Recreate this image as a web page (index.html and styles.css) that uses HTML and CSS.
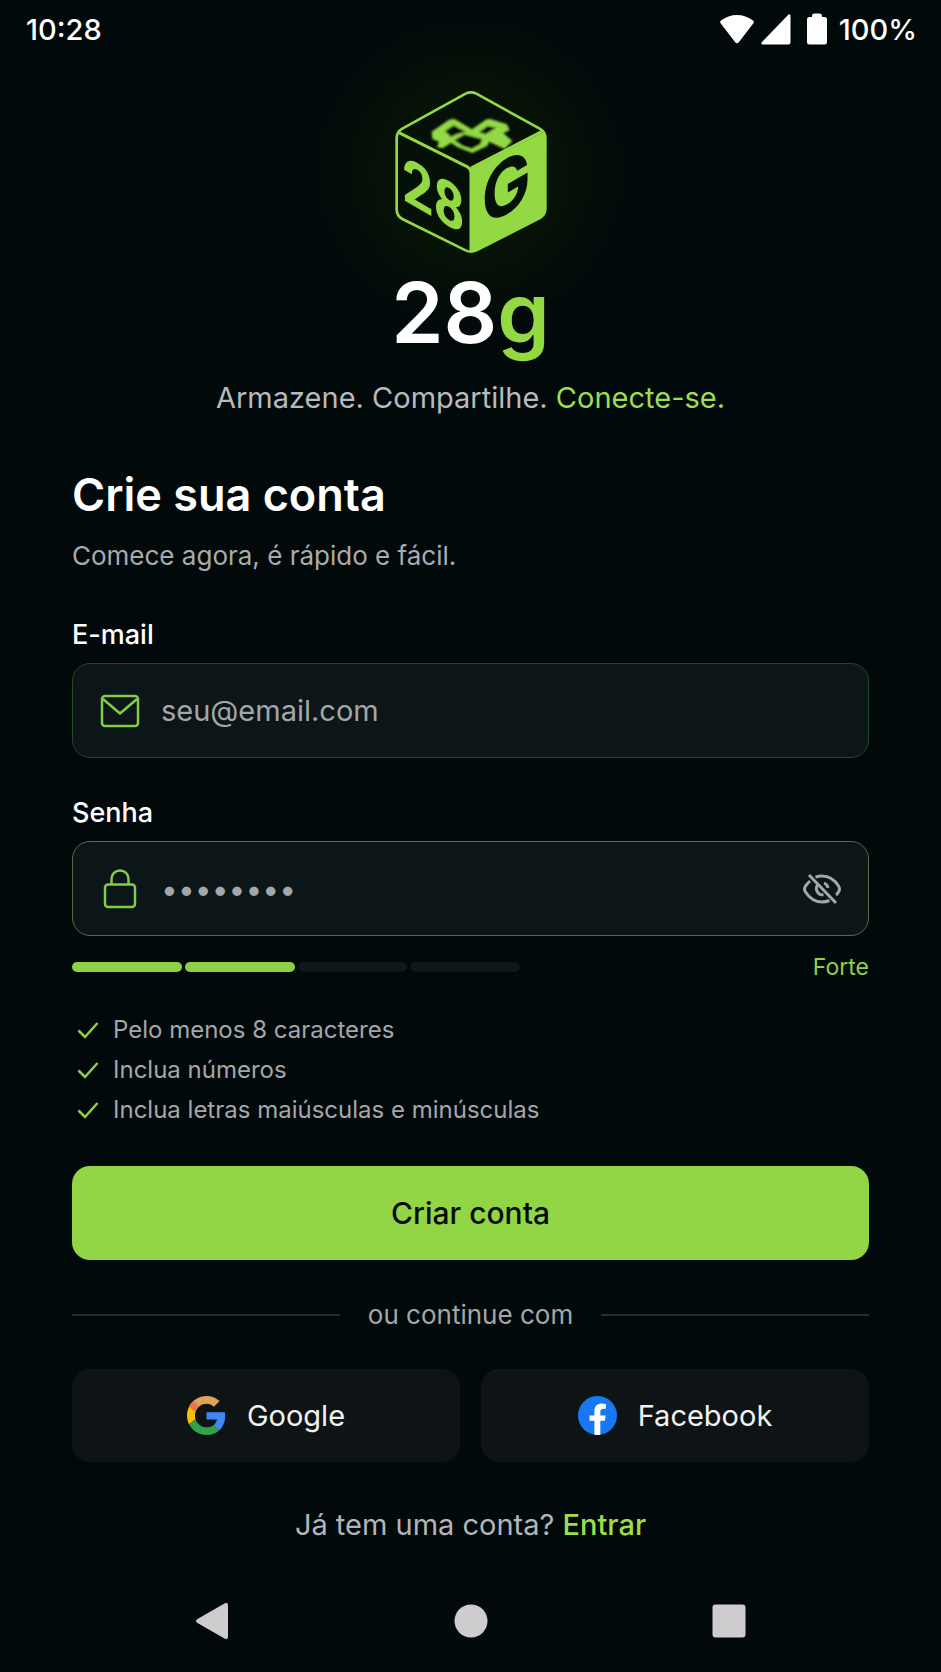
FILE: index.html
```html
<!doctype html>
<html lang="pt-BR">
<head>
  <meta charset="UTF-8" />
  <meta name="viewport" content="width=device-width, initial-scale=1.0" />
  <title>28g - Crie sua conta</title>
  <link rel="stylesheet" href="styles.css">
</head>
<body>
  <header class="status-bar">
    <span>10:28</span>
    <div class="status-icons">
      <svg class="wifi" width="36" height="30" viewBox="0 0 36 30"><path d="M2 6.500C11-1 25-1 34 6.500q1.500 1.300.4 2.700L19.800 28.200q-1.800 2.200-3.600 0L1.600 9.200Q.5 7.800 2 6.500z"/></svg>
      <svg class="signal" width="30" height="31" viewBox="0 0 30 31"><path d="M27 1Q29.500-1 29.500 2V28q0 2.500-2.500 2.500H2.500Q-1 30.500 1 28z"/></svg>
      <svg class="battery" width="20" height="32" viewBox="0 0 20 32"><path d="M5 4V3q0-2.500 2.500-2.500h5Q15 .500 15 3v1h2.500Q20 4 20 6.500v22.500q0 2.500-2.500 2.500h-15Q0 31.500 0 29V6.500Q0 4 2.500 4z"/></svg>
      <span>100%</span>
    </div>
  </header>

  <main class="signup">
    <section class="brand">
      <svg class="brand-logo" width="160" height="170" viewBox="60 50 480 510" role="img" aria-label="28G">
        <defs>
          <filter id="soft" x="-10%" y="-20%" width="120%" height="140%"><feGaussianBlur stdDeviation="2.500"/></filter>
        </defs>
        <!-- contorno do cubo -->
        <path class="cube-body" d="M284 70q16-8 32 0l190 105q17 10 17 28v212q0 18-17 28L316 540q-16 8-32 0L94 446q-17-10-17-28V203q0-18 17-28z"/>
        <!-- face direita -->
        <path class="cube-face" d="M300 296 518 186q5 8 5 17v212q0 18-17 28L316 540q-8 4-16 4z"/>
        <path class="cube-line" d="M82 186 288 289q12 6 12 20v232M300 293 512 184"/>
        <!-- face de cima -->
        <g class="cube-top" filter="url(#soft)">
          <path d="M182 184 232 150Q246 143 256 149L303 177 342 150Q350 144 360 147L408 162 416 180 397 188 424 212 401 236 354 214 350 226 304 248 260 231 240 218 215 234 198 231 204 214 184 206z"/>
          <path class="cube-hole" d="M222 182 248 165 284 184 258 192 240 200zM324 186 350 167 375 172 344 192zM250 210 280 192 334 206 328 222 302 236 274 227z"/>
        </g>
        <text class="cube-num" transform="matrix(.866 .5 0 1 94 387)">28</text>
        <text class="cube-letter" transform="matrix(.866 -.5 0 1 332 474)">G</text>
      </svg>
      <p class="brand-name">28<span>g</span></p>
      <p class="tagline">Armazene. Compartilhe. <span>Conecte-se.</span></p>
    </section>

    <h1>Crie sua conta</h1>
    <p class="subtitle">Comece agora, é rápido e fácil.</p>

    <form class="signup-form">
      <label for="email">E-mail</label>
      <div class="field">
        <svg class="field-icon" width="40" height="40" viewBox="0 0 40 40"><rect x="2" y="5" width="36" height="30" rx="3"/><path d="M3 8 20 22.500 37 8"/></svg>
        <input type="email" id="email" placeholder="seu@email.com" />
      </div>

      <label for="password">Senha</label>
      <div class="field field-active">
        <svg class="field-icon" width="40" height="40" viewBox="0 0 40 40"><rect x="5" y="15.500" width="30" height="22.500" rx="3"/><path d="M11.500 15V10a8.500 8.500 0 0 1 17 0v5"/></svg>
        <input type="password" id="password" value="abcdEF12" />
        <button type="button" class="toggle-password" aria-label="Mostrar senha">
          <svg width="40" height="32" viewBox="0 0 40 32"><path d="M13.500 4.200A20 20 0 0 1 20 3c7 0 13 4.500 16.500 10 1.300 2 1.300 4 0 6q-1 1.700-2.500 3M8 8Q5.500 10.300 3.500 13c-1.300 2-1.300 4 0 6C7 24.500 13 29 20 29q4 0 7.500-1.500M17 10.500A6 6 0 0 0 15 18a6 6 0 0 0 6.500 3.700M22 10.200A6 6 0 0 1 26 15M7 2 34 30"/></svg>
        </button>
      </div>

      <div class="strength">
        <div class="strength-bars">
          <span class="bar filled"></span>
          <span class="bar filled"></span>
          <span class="bar"></span>
          <span class="bar"></span>
        </div>
        <span class="strength-text">Forte</span>
      </div>

      <ul class="rules">
        <li><svg width="22" height="18" viewBox="0 0 22 18"><path d="M1.500 9.500 8 16 20.500 2"/></svg>Pelo menos 8 caracteres</li>
        <li><svg width="22" height="18" viewBox="0 0 22 18"><path d="M1.500 9.500 8 16 20.500 2"/></svg>Inclua números</li>
        <li><svg width="22" height="18" viewBox="0 0 22 18"><path d="M1.500 9.500 8 16 20.500 2"/></svg>Inclua letras maiúsculas e minúsculas</li>
      </ul>

      <button type="submit" class="btn-primary">Criar conta</button>
    </form>

    <div class="divider">ou continue com</div>

    <div class="social">
      <button type="button" class="btn-social">
        <svg width="39" height="39" viewBox="0 0 48 48">
          <path fill="#e0a458" d="M24 9.500c3.540 0 6.710 1.220 9.210 3.600l6.850-6.850C35.900 2.380 30.470 0 24 0 14.620 0 6.510 5.380 2.560 13.220l7.980 6.190C12.430 13.720 17.740 9.500 24 9.500z"/>
          <path fill="#e2784f" d="M2.560 13.220l7.980 6.190q1.500-4.200 4.300-6.600L8 6.300Q4.500 9.300 2.560 13.220z"/>
          <path fill="#4285f4" d="M46.980 24.550c0-1.570-.15-3.090-.38-4.550H24v9.020h12.940c-.58 2.960-2.260 5.480-4.780 7.180l7.730 6c4.510-4.180 7.090-10.360 7.090-17.650z"/>
          <path fill="#fbbc05" d="M10.530 28.590c-.48-1.450-.76-2.990-.76-4.590s.27-3.140.76-4.590l-7.980-6.190C.92 16.460 0 20.120 0 24c0 3.880.92 7.540 2.560 10.780l7.970-6.190z"/>
          <path fill="#34a04a" d="M24 48c6.480 0 11.930-2.130 15.890-5.810l-7.730-6c-2.150 1.450-4.920 2.300-8.160 2.300-6.260 0-11.570-4.220-13.470-9.910l-7.980 6.190C6.510 42.620 14.620 48 24 48z"/>
        </svg>
        Google
      </button>
      <button type="button" class="btn-social">
        <svg width="39" height="39" viewBox="0 0 40 40">
          <circle cx="20" cy="20" r="20" fill="#1877f2"/>
          <path fill="#fff" d="M16.800 39.700V25.500h-5v-5.600h5v-4.300c0-5 3-7.800 7.500-7.800q2.300 0 4.300.4v4.900h-2.500c-2.400 0-3.200 1.500-3.200 3v3.800h5.500l-.9 5.600h-4.600v14.200q-3 .5-6.100 0z"/>
        </svg>
        Facebook
      </button>
    </div>

    <p class="login">Já tem uma conta? <a href="#">Entrar</a></p>
  </main>

  <nav class="nav-bar">
    <button type="button" aria-label="Voltar"><svg width="36" height="38" viewBox="0 0 36 38"><path d="M29.500 1.500Q33-.500 33 3.500v31q0 4-3.500 2L2.500 21q-3-2 0-4z"/></svg></button>
    <button type="button" aria-label="Início"><svg width="36" height="38" viewBox="0 0 36 38"><circle cx="18" cy="19" r="16.500"/></svg></button>
    <button type="button" aria-label="Recentes"><svg width="36" height="38" viewBox="0 0 36 38"><rect x="1.500" y="2.500" width="33" height="33" rx="3"/></svg></button>
  </nav>
</body>
</html>
```
FILE: styles.css
```css
* {
  margin: 0;
  padding: 0;
  box-sizing: border-box;
}

body {
  min-height: 100vh;
  display: flex;
  flex-direction: column;
  font-family: Inter, Roboto, "Liberation Sans", sans-serif;
  color: #fff;
  background: radial-gradient(circle at 50% 172px, #0a1c04 0, #061206 85px, #02090b 160px) #02090b;
}

button,
input {
  font-family: inherit;
  border: none;
  background: none;
  color: inherit;
}

.status-bar {
  display: flex;
  justify-content: space-between;
  align-items: center;
  height: 58px;
  padding: 0 24px 0 26px;
  font-size: 29px;
  font-weight: 500;
}

.status-icons {
  display: flex;
  align-items: center;
  fill: #fff;
}

.signal {
  margin-left: 6px;
}

.battery {
  margin: 0 12px 0 16px;
}

.signup {
  padding: 29px 72px 0;
}

.brand {
  display: flex;
  flex-direction: column;
  align-items: center;
}

.cube-body {
  fill: #051006;
  stroke: #93d944;
  stroke-width: 8;
}

.cube-face,
.cube-top {
  fill: #93d944;
}

.cube-top .cube-hole {
  fill: #051006;
}

.cube-line {
  fill: none;
  stroke: #93d944;
  stroke-width: 9;
}

.cube-num {
  font: 700 188px Roboto, sans-serif;
  fill: #93d944;
}

.cube-letter {
  font: 700 226px Inter, sans-serif;
  fill: #051006;
}

.brand-name {
  margin-top: 8px;
  font-size: 84px;
  line-height: 96px;
  font-weight: 600;
}

.brand-name span {
  color: #93d944;
}

.tagline {
  margin-top: 17px;
  font-size: 29px;
  line-height: 40px;
  color: #b9babd;
}

.tagline span {
  color: #9bdf50;
}

h1 {
  margin-top: 49px;
  font-size: 45px;
  line-height: 56px;
  font-weight: 600;
}

.subtitle {
  margin-top: 15px;
  font-size: 26px;
  line-height: 36px;
  color: #a9abad;
}

.signup-form {
  display: flex;
  flex-direction: column;
  margin-top: 6px;
}

label {
  margin-top: 37px;
  font-size: 27px;
  line-height: 36px;
  font-weight: 500;
}

.field {
  display: flex;
  align-items: center;
  height: 95px;
  margin-top: 10px;
  padding: 0 26px 0 27px;
  border: 1px solid #234a26;
  border-radius: 18px;
  background-color: #0c1517;
}

.field-active {
  border-color: #536f4a;
}

.field-icon {
  fill: none;
  stroke: #83cc45;
  stroke-width: 2.5;
  stroke-linejoin: round;
}

.field input {
  flex: 1;
  min-width: 0;
  height: 100%;
  margin-left: 21px;
  font-size: 29px;
  color: #a4a7a9;
  outline: none;
}

.field input::placeholder {
  color: #a4a7a9;
}

.field input[type="password"] {
  font-size: 30px;
}

.toggle-password {
  display: flex;
  cursor: pointer;
}

.toggle-password svg {
  fill: none;
  stroke: #a4a7a9;
  stroke-width: 3;
}

.strength {
  display: flex;
  justify-content: space-between;
  align-items: center;
  margin-top: 15px;
}

.strength-bars {
  display: flex;
  gap: 3px;
  width: 448px;
}

.bar {
  flex: 1;
  height: 10px;
  border-radius: 5px;
  background-color: #0e1719;
}

.bar.filled {
  background-color: #8fd047;
}

.strength-text {
  font-size: 23px;
  line-height: 32px;
  color: #8fd047;
}

.rules {
  margin-top: 27px;
  list-style: none;
  font-size: 24px;
  line-height: 40px;
  color: #a4a7a9;
}

.rules li {
  display: flex;
  align-items: center;
  gap: 14px;
  padding-left: 5px;
}

.rules svg {
  fill: none;
  stroke: #8fd047;
  stroke-width: 2.5;
}

.btn-primary {
  height: 94px;
  margin-top: 36px;
  border-radius: 18px;
  background-color: #93d645;
  color: #050b04;
  font-size: 30px;
  font-weight: 500;
  cursor: pointer;
}

.divider {
  display: flex;
  align-items: center;
  gap: 28px;
  margin-top: 37px;
  font-size: 26px;
  line-height: 36px;
  color: #a4a7a9;
}

.divider::before,
.divider::after {
  content: "";
  flex: 1;
  height: 2px;
  background-color: #272c2e;
}

.social {
  display: flex;
  gap: 21px;
  margin-top: 36px;
}

.btn-social {
  flex: 1;
  display: flex;
  justify-content: center;
  align-items: center;
  gap: 21px;
  height: 93px;
  border-radius: 18px;
  background-color: #0e1416;
  color: #f2f2f2;
  font-size: 29px;
  cursor: pointer;
}

.login {
  margin-top: 43px;
  text-align: center;
  font-size: 29px;
  line-height: 40px;
  color: #b4b5b9;
}

.login a {
  color: #9bdf45;
  font-weight: 500;
  text-decoration: none;
}

.nav-bar {
  display: flex;
  justify-content: center;
  align-items: center;
  gap: 222px;
  height: 102px;
  margin-top: auto;
}

.nav-bar button {
  display: flex;
  cursor: pointer;
}

.nav-bar svg {
  fill: #ceccce;
}
```
